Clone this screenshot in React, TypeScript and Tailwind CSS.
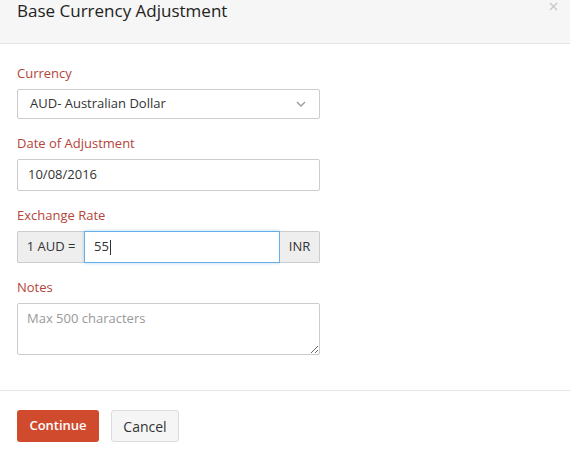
import React from "react";

const label = "block text-[13px] leading-[18px] text-[#b3443a] mb-[7px]";
const inputBase =
  "w-[303px] border border-[#ccc] rounded-[2px] text-[13px] text-[#333] bg-white";

export default function App() {
  return (
    <div
      className="w-[570px] h-[456px] bg-white overflow-hidden"
      style={{ fontFamily: "'Open Sans', 'Liberation Sans', sans-serif" }}
    >
      <div className="h-[44px] bg-[#f6f6f6] border-b border-[#e5e5e5] flex justify-between items-start pl-[17px] pr-[12px]">
        <h1 className="text-[17px] leading-[20px] text-[#222] mt-[1px]">Base Currency Adjustment</h1>
        <svg width="9" height="9" viewBox="0 0 9 9" className="mt-[2px]">
          <path d="M1 1l7 7M8 1l-7 7" stroke="#c8c8c8" strokeWidth="1.4" fill="none" />
        </svg>
      </div>
      <div className="pt-[20px] pl-[17px] pb-[35px]">
        <label className={label}>Currency</label>
        <div className={inputBase + " h-[30px] px-[12px] flex items-center justify-between"}>
          <span>AUD- Australian Dollar</span>
          <svg width="10" height="6" viewBox="0 0 10 6" className="mr-[1px]">
            <path d="M1 1l4 4 4-4" fill="none" stroke="#999" strokeWidth="1.3" />
          </svg>
        </div>
        <label className={label + " mt-[15px]"}>Date of Adjustment</label>
        <div className={inputBase + " h-[32px] px-[10px] flex items-center"}>10/08/2016</div>
        <label className={label + " mt-[15px]"}>Exchange Rate</label>
        <div className="flex w-[303px] h-[32px] text-[13px] text-[#333]">
          <div className="w-[67px] bg-[#eeeeee] border border-[#ccc] border-r-0 rounded-l-[2px] flex items-center justify-center">
            1 AUD =
          </div>
          <div className="flex-1 border border-[#66afe9] shadow-[0_0_3px_rgba(102,175,233,0.5)] bg-white flex items-center px-[9px]">
            55<span className="inline-block w-[1px] h-[15px] bg-[#333] ml-[1px]" />
          </div>
          <div className="w-[40px] bg-[#eeeeee] border border-[#ccc] border-l-0 rounded-r-[2px] flex items-center justify-center">
            INR
          </div>
        </div>
        <label className={label + " mt-[15px]"}>Notes</label>
        <textarea
          placeholder="Max 500 characters"
          className="block w-[303px] h-[52px] border border-[#ccc] rounded-[2px] px-[9px] py-[5px] text-[13px] text-[#333] placeholder:text-[#999] outline-none"
        />
      </div>
      <div className="border-t border-[#e5e5e5] pt-[19px] pl-[17px] flex gap-[12px]">
        <button className="w-[82px] h-[32px] bg-[#d04b2d] text-white font-semibold text-[13px] rounded-[3px]">
          Continue
        </button>
        <button className="w-[68px] h-[32px] bg-[#f5f5f5] border border-[#dcdcdc] text-[#333] text-[14px] rounded-[3px]">
          Cancel
        </button>
      </div>
    </div>
  );
}
